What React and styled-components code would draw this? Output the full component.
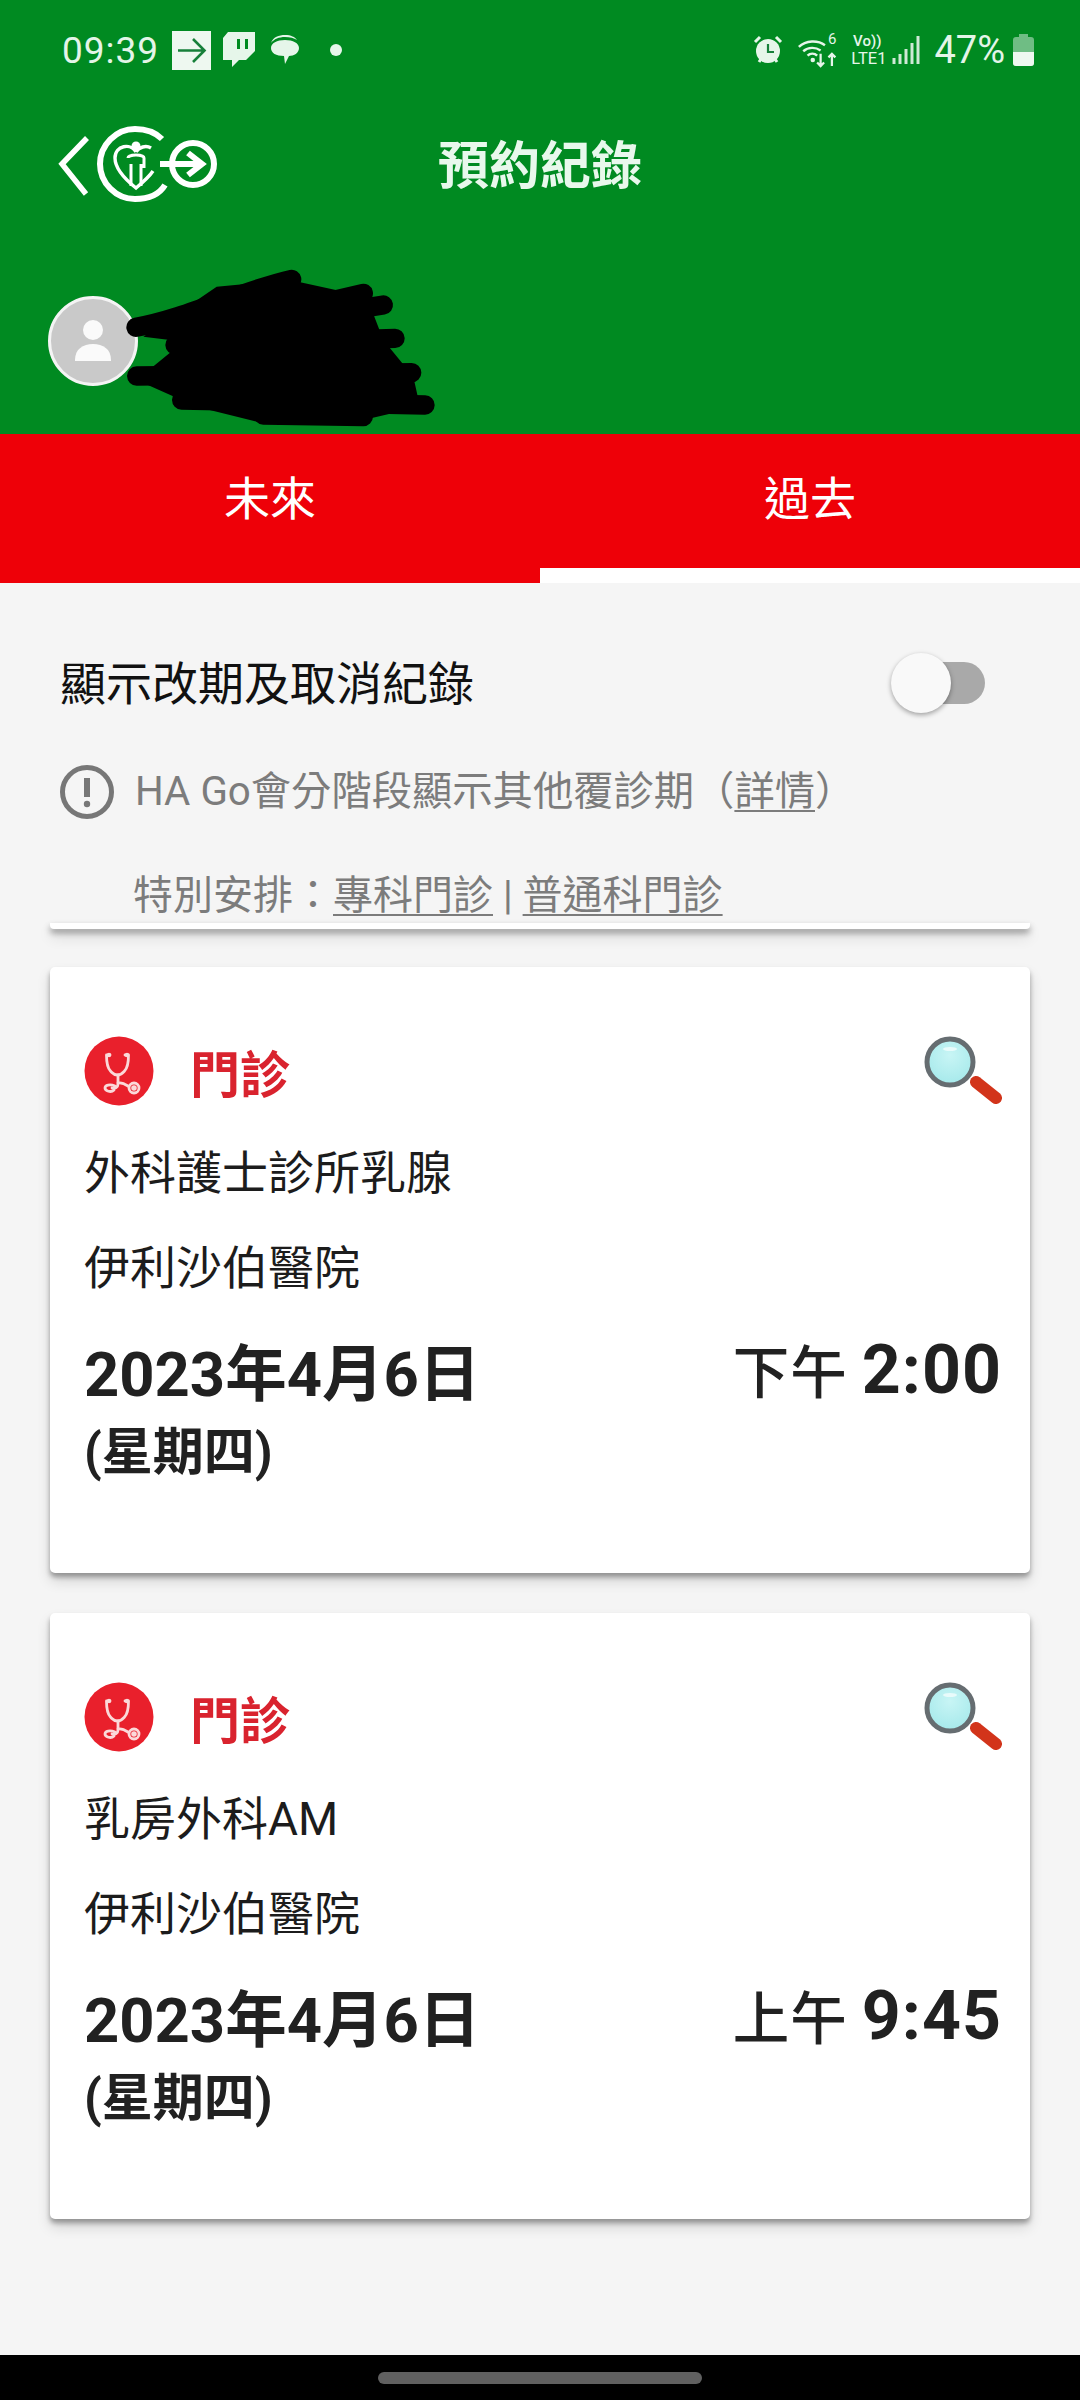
import React from "react";
import styled, { createGlobalStyle } from "styled-components";

const Global = createGlobalStyle`
  html, body { margin: 0; padding: 0; background: #f5f5f5; }
  * { box-sizing: border-box; }
  #root { width: 1080px; height: 2400px; }
`;
const FONT = `Roboto, "Noto Sans CJK TC", "Noto Sans CJK SC", sans-serif`;
const CJK = `"Noto Sans CJK TC", "Noto Sans CJK SC", Roboto, sans-serif`;

const Page = styled.div`
  width: 1080px; height: 2400px; display: flex; flex-direction: column;
  background: #f5f5f5; font-family: ${FONT}; overflow: hidden;
`;
const Green = styled.header`
  height: 434px; background: #008a21; display: flex; flex-direction: column; flex: none;
`;
const StatusBar = styled.div`
  height: 100px; padding: 0 46px 0 62px; display: flex; align-items: center; justify-content: space-between;
  color: #e4f5e8; font-size: 36px;
`;
const StatusGroup = styled.div`display: flex; align-items: center; gap: ${p => p.$gap || 10}px;`;
const Time = styled.span`font-size: 37px; letter-spacing: 1px; margin-right: 2px;`;
const Percent = styled.span`font-size: 38px; letter-spacing: 0; margin: 0 2px 0 8px;`;
const WifiIcon = styled.div`
  position: relative; width: 40px; height: 30px; margin-left: 9px;
`;
const WifiBand = styled.span`
  position: absolute; right: 2px; top: -4px; font-size: 15px; line-height: 17px; color: #e6f6ea;
`;
const NetworkLabel = styled.div`
  width: 42px; display: flex; flex-direction: column; align-items: flex-end; color: #e6f6ea;
  font-size: 16.5px; line-height: 17px; white-space: nowrap;
`;
const VoLte = styled.span`font-size: 15px; font-weight: 500; padding-right: 5px;`;
const NavBar = styled.div`
  height: 130px; display: grid; grid-template-columns: 1fr auto 1fr; align-items: center; padding-left: 56px;
`;
const LogoMark = styled.svg`width: 164px; height: 76px; margin-bottom: 2px;`;
const Title = styled.h1`
  margin: 0 0 6px; color: #e8f8ec; font-family: ${CJK}; font-size: 51px; font-weight: 700; line-height: 1;
  transform: translateX(-28px);
`;
const Profile = styled.div`
  position: relative; margin: 66px 0 0 48px; height: 90px;
`;
const Avatar = styled.div`
  width: 90px; height: 90px; border-radius: 50%; background: #c9c9c9; border: 3px solid #f4f4f4;
  display: flex; align-items: center; justify-content: center;
`;
const Redaction = styled.svg`
  position: absolute; left: -18px; top: -36px; width: 420px; height: 180px;
`;
const Tabs = styled.nav`
  display: grid; grid-template-columns: 1fr 1fr; height: 149px; background: #ee0008; flex: none;
`;
const Tab = styled.div`
  display: flex; align-items: center; justify-content: center; color: #fff; font-family: ${CJK};
  font-size: 46px; padding-bottom: 13px; border-bottom: 15px solid ${p => (p.$active ? "#fff" : "transparent")};
`;
const Filter = styled.section`
  height: 346px; background: #f5f5f5; padding: 0 50px; flex: none; position: relative;
`;
const ToggleRow = styled.div`
  display: flex; justify-content: space-between; align-items: center; padding: 60px 45px 0 10px; height: 134px;
`;
const ToggleLabel = styled.div`
  font-family: ${CJK}; font-size: 46px; color: #111; line-height: 68px;
`;
const Switch = styled.div`
  position: relative; width: 91px; height: 42px; border-radius: 21px; background: #a9a9a9; margin-top: 6px;
`;
const Thumb = styled.div`
  position: absolute; left: -3px; top: -9px; width: 60px; height: 60px; border-radius: 50%; background: #f9f9f9;
  box-shadow: 0 2px 5px rgba(0,0,0,.35);
`;
const Notice = styled.div`
  display: flex; align-items: center; gap: 21px; margin: 48px 0 0 10px; height: 54px;
`;
const NoticeText = styled.div`
  font-size: ${p => p.$size || 40.3}px; color: #7c7c7c; font-family: ${FONT}; line-height: 54px; white-space: nowrap;
  margin-left: ${p => p.$indent || 0}px; margin-top: ${p => p.$top || 0}px;
`;
const Link = styled.span`text-decoration: underline; text-underline-offset: 5px; text-decoration-thickness: 2px;`;
const FilterEdge = styled.div`
  position: absolute; left: 50px; right: 50px; bottom: 0; height: 6px; background: #fff; border-radius: 0 0 4px 4px;
  box-shadow: 0 4px 6px rgba(0,0,0,.38), 0 8px 14px rgba(0,0,0,.14);
`;
const List = styled.main`
  display: flex; flex-direction: column; gap: 40px; padding: 38px 50px 0; flex: 1;
`;
const Card = styled.article`
  height: 606px; background: #fff; border-radius: 5px; padding: 69px 28px 0 34px;
  box-shadow: 0 4px 5px rgba(0,0,0,.32), 0 8px 14px rgba(0,0,0,.14);
`;
const CardHead = styled.div`display: flex; align-items: center; height: 70px;`;
const Kind = styled.div`
  margin-left: 36px; font-family: ${CJK}; font-size: 50px; font-weight: 700; color: #d9232e; line-height: 1; flex: 1;
`;
const Lens = styled.svg`width: 80px; height: 70px; margin-right: -1px; flex: none; filter: blur(0.7px);`;
const Dept = styled.div`
  font-family: ${FONT}; font-size: 46px; color: #1c1c1c; line-height: 60px; margin-top: ${p => p.$top}px;
`;
const DateRow = styled.div`
  display: flex; justify-content: space-between; align-items: baseline; margin-top: 38px; line-height: 74px; color: #212121;
`;
const DateText = styled.div`font-size: 61.5px; font-weight: 700;`;
const TimeText = styled.div`font-size: 68px; font-weight: 700; letter-spacing: 1px; transform: translateY(-3px);`;
const Meridiem = styled.span`font-size: 56.5px; font-weight: 500; margin-right: 14px;`;
const Weekday = styled.div`font-size: 51px; font-weight: 700; color: #212121; line-height: 60px; margin-top: 9px;`;
const BottomBar = styled.div`
  height: 45px; background: #000; flex: none; display: flex; justify-content: center; padding-top: 17px;
`;
const Pill = styled.div`width: 324px; height: 12px; border-radius: 6px; background: #606060;`;

const Stethoscope = () => (
  <svg width="70" height="70" viewBox="0 0 70 70" style={{ flex: "none" }}>
    <circle cx="35" cy="35" r="34.5" fill="#e9202c" />
    <g fill="none" stroke="#fbd9d9" strokeWidth="2.8" strokeLinecap="round" strokeLinejoin="round">
      <path d="M26 19h-3.5c0 8 1 13 4 16 3 3 3 4 7 4s5-2 7-4c3-3 4-8 4-16H41" />
      <path d="M34 39v9c0 3-3 5-6 4" />
      <path d="M30 54c-3 3-9 1-9-2 0-3 5-4 10-2" />
      <path d="M34 47c4-1 7 1 10 3" />
      <circle cx="50" cy="52" r="5" />
      <circle cx="50" cy="52" r="1.4" />
    </g>
    <circle cx="25" cy="19" r="2.2" fill="#fbd9d9" />
    <circle cx="43" cy="19" r="2.2" fill="#fbd9d9" />
  </svg>
);

const Magnifier = ({ id }) => (
  <Lens viewBox="0 0 80 70">
    <defs>
      <radialGradient id={id} cx="50%" cy="35%" r="70%">
        <stop offset="0" stopColor="#c8f5f5" />
        <stop offset="1" stopColor="#a3e8ea" />
      </radialGradient>
    </defs>
    <path d="M53 46L73 62" stroke="#d2341a" strokeWidth="12" strokeLinecap="round" />
    <circle cx="27" cy="26" r="23" fill={`url(#${id})`} stroke="#666d71" strokeWidth="5" />
    <ellipse cx="27" cy="13" rx="7" ry="2" fill="#e8fbfb" />
  </Lens>
);

const appointments = [
  { id: "a", dept: "外科護士診所乳腺", mer: "下午", time: "2:00" },
  { id: "b", dept: "乳房外科AM", mer: "上午", time: "9:45" },
];

export default function App() {
  return (
    <Page>
      <Global />
      <Green>
        <StatusBar>
          <StatusGroup $gap={11}>
            <Time>09:39</Time>
            <svg width="39" height="39" viewBox="0 0 39 39">
              <rect width="39" height="39" fill="#eef8f0" />
              <path d="M6 19.5h26M21 8l11.5 11.5L21 31" fill="none" stroke="#17803a" strokeWidth="2.6" />
            </svg>
            <svg width="33" height="38" viewBox="0 0 33 38">
              <path fillRule="evenodd" fill="#e6f6ea" d="M6 1h27v19l-9 9h-7l-7 7v-7H1V7zM15 8v10h3V8zm8 0v10h3V8z" />
            </svg>
            <svg width="32" height="32" viewBox="0 0 32 32" style={{ marginLeft: 3 }}>
              <path d="M2 9C4 3 10 1 16 1c6 0 10 2 12 5-3-2-7-3-12-3C10 3 5 5 2 9z" fill="#e6f6ea" />
              <path d="M16 6c8 0 14 3 14 8s-5 8-10 8l-4 8-1-8C7 22 2 19 2 14s6-8 14-8z" fill="#e6f6ea" />
            </svg>
            <svg width="12" height="12" viewBox="0 0 12 12" style={{ marginLeft: 18 }}>
              <circle cx="6" cy="6" r="6" fill="#e6f6ea" />
            </svg>
          </StatusGroup>
          <StatusGroup $gap={6}>
            <svg width="30" height="30" viewBox="0 0 30 30">
              <circle cx="15" cy="16" r="12" fill="#e6f6ea" />
              <path d="M15 9v8h6" fill="none" stroke="#17803a" strokeWidth="2.2" />
              <path d="M2 7l5-5M28 7l-5-5M6 27l2-3M24 27l-2-3" stroke="#e6f6ea" strokeWidth="3" />
            </svg>
            <WifiIcon>
              <svg width="40" height="30" viewBox="0 0 46 34">
                <g fill="none" stroke="#e6f6ea" strokeWidth="2.8">
                  <path d="M1 10C9 2 23 2 31 8" />
                  <path d="M6 15c6-5 14-5 20-1" />
                  <path d="M11 20c3-3 8-3 11 0" />
                </g>
                <circle cx="17" cy="25" r="2.6" fill="#e6f6ea" />
                <path d="M26 18v14m-4-4l4 4 4-4M39 32V18m-4 4l4-4 4 4" fill="none" stroke="#e6f6ea" strokeWidth="2.6" />
              </svg>
              <WifiBand>6</WifiBand>
            </WifiIcon>
            <NetworkLabel>
              <VoLte>Vo))</VoLte>
              <span>LTE1</span>
            </NetworkLabel>
            <svg width="28" height="30" viewBox="0 0 28 30">
              <path d="M2 23v6M8 19v10M14 14v15M20 8v21M26 1v28" stroke="#cfe9d6" strokeWidth="3" />
            </svg>
            <Percent>47%</Percent>
            <svg width="21" height="32" viewBox="0 0 21 32">
              <path d="M6 0h9v3h3a3 3 0 013 3v23a3 3 0 01-3 3H3a3 3 0 01-3-3V6a3 3 0 013-3h3z" fill="#6fbd84" />
              <path d="M0 18h21v11a3 3 0 01-3 3H3a3 3 0 01-3-3z" fill="#eef8f0" />
            </svg>
          </StatusGroup>
        </StatusBar>
        <NavBar>
          <LogoMark viewBox="0 0 164 76" aria-label="HA Go">
            <g fill="none" stroke="#fff">
              <path d="M31 12L6 38l24 30" strokeWidth="5.5" />
              <path d="M106 13C99 6 90 3 79 3 60 3 44 19 44 38s16 35 35 35c13 0 24-4 30-14" strokeWidth="6" />
              <circle cx="137" cy="38" r="21" strokeWidth="6" />
              <path d="M104 38h42M132 27l14 11-14 11" strokeWidth="6" />
              <path d="M80 26c-5-9-21-7-21 6 0 11 11 22 21 30 6-5 13-11 17-17" strokeWidth="3.4" />
              <path d="M80 26c3-5 10-7 15-4" strokeWidth="3.4" />
              <path d="M72 32c0-4 16-4 16 0v10M75 38v22M85 38v22" strokeWidth="3" />
            </g>
            <circle cx="80" cy="20" r="4.5" fill="#fff" />
          </LogoMark>
          <Title>預約紀錄</Title>
          <span />
        </NavBar>
        <Profile>
          <Avatar>
            <svg width="36" height="42" viewBox="0 0 36 42">
              <circle cx="18" cy="10" r="10" fill="#fafafa" />
              <path d="M0 40c0-11 8-16 18-16s18 5 18 16v1H0z" fill="#fafafa" />
            </svg>
          </Avatar>
          <Redaction viewBox="0 0 1260 540">
            <path fill="#000" d="M340 230L560 80 780 60 1010 110 1060 240 1150 350 1170 440 1000 480 700 490 500 440 320 360 430 270 420 240z" />
            <g fill="none" stroke="#000" strokeWidth="58" strokeLinecap="round">
              <path d="M318 202C470 175 640 90 785 58" />
              <path d="M700 170L1000 100" />
              <path d="M900 160L1060 135" />
              <path d="M435 255L1095 235" />
              <path d="M320 348L1145 338" />
              <path d="M455 420L1185 435" />
              <path d="M700 465L1000 470" />
            </g>
          </Redaction>
        </Profile>
      </Green>
      <Tabs>
        <Tab>未來</Tab>
        <Tab $active>過去</Tab>
      </Tabs>
      <Filter>
        <ToggleRow>
          <ToggleLabel>顯示改期及取消紀錄</ToggleLabel>
          <Switch><Thumb /></Switch>
        </ToggleRow>
        <Notice>
          <svg width="54" height="54" viewBox="0 0 54 54" style={{ flex: "none" }}>
            <circle cx="27" cy="27" r="24.5" fill="none" stroke="#777" strokeWidth="5" />
            <path d="M27 13v19" stroke="#777" strokeWidth="6" />
            <circle cx="27" cy="39" r="3.2" fill="#777" />
          </svg>
          <NoticeText>HA Go會分階段顯示其他覆診期（<Link>詳情</Link>）</NoticeText>
        </Notice>
        <NoticeText $size={40} $indent={83} $top={50}>特別安排：<Link>專科門診</Link> | <Link>普通科門診</Link></NoticeText>
        <FilterEdge />
      </Filter>
      <List>
        {appointments.map(a => (
          <Card key={a.id}>
            <CardHead>
              <Stethoscope />
              <Kind>門診</Kind>
              <Magnifier id={`lens-${a.id}`} />
            </CardHead>
            <Dept $top={37}>{a.dept}</Dept>
            <Dept $top={35}>伊利沙伯醫院</Dept>
            <DateRow>
              <DateText>2023年4月6日</DateText>
              <TimeText><Meridiem>{a.mer}</Meridiem>{a.time}</TimeText>
            </DateRow>
            <Weekday>(星期四)</Weekday>
          </Card>
        ))}
      </List>
      <BottomBar><Pill /></BottomBar>
    </Page>
  );
}
